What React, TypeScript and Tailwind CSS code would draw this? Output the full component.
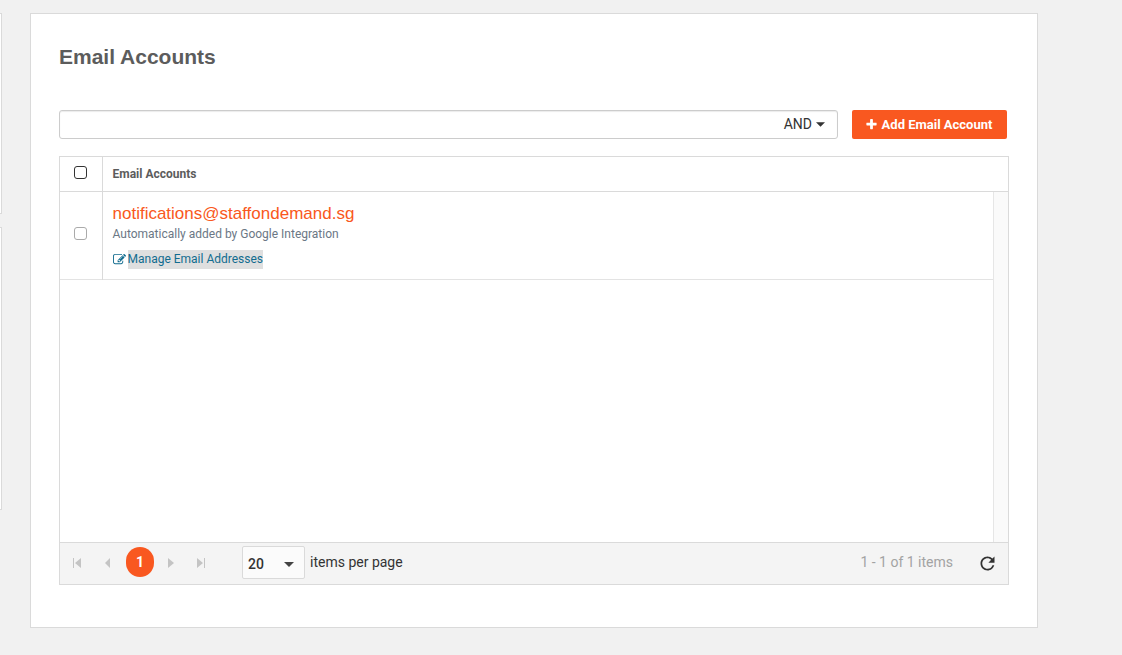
import { useState } from 'react'
import { MdRefresh } from 'react-icons/md'
import clsx from 'clsx'

const accounts = [
  { email: 'notifications@staffondemand.sg', note: 'Automatically added by Google Integration' },
]

const pagerIcons = {
  first: 'M0 0h1v10H0zM8 0v10L2 5z',
  prev: 'M7 0v10L2 5z',
  next: 'M1 0v10l6-5z',
  last: 'M0 0v10l6-5zM7 0h1v10H7z',
}

function PagerButton({ icon, label, className }: { icon: keyof typeof pagerIcons; label: string; className?: string }) {
  return (
    <button aria-label={label} className={clsx('flex h-5 w-5 items-center justify-center text-[#c4c4c4]', className)}>
      <svg viewBox="0 0 9 10" className="h-[10px] w-[9px]" fill="currentColor">
        <path d={pagerIcons[icon]} />
      </svg>
    </button>
  )
}

function Caret({ className }: { className?: string }) {
  return (
    <svg viewBox="0 0 10 5" className={className} fill="currentColor">
      <path d="M0 0h10L5 5z" />
    </svg>
  )
}

export default function App() {
  const [query, setQuery] = useState('')
  const [checked, setChecked] = useState(false)

  return (
    <div className="flex min-h-screen items-start bg-[#f1f1f1] pt-[13px] pb-[27px] font-['Roboto',sans-serif] text-[#333]">
      {/* Edge of the settings column */}
      <aside className="flex w-0.5 shrink-0 flex-col gap-[13px]">
        <div className="h-[201px] border border-l-0 border-[#dadada] bg-white" />
        <div className="h-[283px] border border-l-0 border-[#dadada] bg-white" />
      </aside>

      <main className="mr-[84px] ml-7 min-w-0 flex-1 border border-[#dadada] bg-white px-7 pt-7 pb-[42px]">
        <h1 className="font-['Liberation_Sans',Arial,sans-serif] text-[21px] leading-[30px] font-bold text-[#5c5c5c]">
          Email Accounts
        </h1>

        {/* Search */}
        <div className="mt-[38px] mr-0.5 flex h-[29px] gap-3.5">
          <div className="flex flex-1 items-center rounded-[3px] border border-[#ccc] pr-3 shadow-[inset_0_1px_1px_rgba(0,0,0,0.08)]">
            <input
              type="text"
              aria-label="Search email accounts"
              value={query}
              onChange={(e) => setQuery(e.target.value)}
              className="h-full min-w-0 flex-1 bg-transparent px-2 text-sm outline-none"
            />
            <button className="flex items-center gap-1 pb-px text-sm">
              AND
              <Caret className="h-[5px] w-[9px]" />
            </button>
          </div>
          <button className="flex w-[155px] items-center justify-center gap-1 rounded-[2px] bg-[#f95820] pr-0.5 text-[13px] font-bold whitespace-nowrap text-white">
            <svg viewBox="0 0 1792 1792" className="h-[13px] w-[13px]" fill="currentColor">
              <path d="M1600 736v192q0 40-28 68t-68 28h-416v416q0 40-28 68t-68 28h-192q-40 0-68-28t-28-68v-416h-416q-40 0-68-28t-28-68v-192q0-40 28-68t68-28h416v-416q0-40 28-68t68-28h192q40 0 68 28t28 68v416h416q40 0 68 28t28 68z" />
            </svg>
            Add Email Account
          </button>
        </div>

        {/* Grid */}
        <div className="mt-[17px] border border-[#dadada]">
          <table className="w-full table-fixed border-collapse">
            <thead>
              <tr className="h-[34px] border-b border-[#dadada]">
                <th className="w-[42px] border-r border-[#dadada] p-0 pb-0.5">
                  <input
                    type="checkbox"
                    aria-label="Select all"
                    checked={checked}
                    onChange={(e) => setChecked(e.target.checked)}
                    className="mx-auto block h-[13px] w-[13px] appearance-none rounded-[3px] border border-[#333] bg-white checked:bg-[#f95820]"
                  />
                </th>
                <th className="px-2.5 py-0 text-left text-xs font-bold text-[#5c5c5c]">Email Accounts</th>
              </tr>
            </thead>
          </table>

          <div className="flex h-[350px]">
            <div className="min-w-0 flex-1">
              <table className="w-full table-fixed border-collapse">
                <tbody>
                  {accounts.map((account) => (
                    <tr key={account.email} className="h-[88px] border-b border-[#e3e3e3]">
                      <td className="w-[42px] border-r border-[#dadada] p-0 pb-1">
                        <input
                          type="checkbox"
                          aria-label={account.email}
                          className="mx-auto block h-[13px] w-[13px] appearance-none rounded-[3px] border border-[#aaa] bg-white checked:bg-[#f95820]"
                        />
                      </td>
                      <td className="px-2.5 pt-0.5 pb-0">
                        <a href="#account" className="block pt-px font-['Liberation_Sans',Arial,sans-serif] text-[17px] leading-5 text-[#f95820]">
                          {account.email}
                        </a>
                        <p className="text-xs leading-5 text-[#6b7785]">{account.note}</p>
                        <a href="#addresses" className="mt-1.5 flex items-center gap-0.5 text-xs text-[#126c8f]">
                          <svg viewBox="0 0 1792 1792" className="h-[13px] w-[13px]" fill="currentColor">
                            <path d="M888 1184l116-116-152-152-116 116v56h96v96h56zm440-720q-16-16-33 1l-350 350q-17 17-1 33t33-1l350-350q17-17 1-33zm80 594v190q0 119-84.5 203.5t-203.5 84.5h-832q-119 0-203.5-84.5t-84.5-203.5v-832q0-119 84.5-203.5t203.5-84.5h832q63 0 117 25 15 7 18 23 3 17-9 29l-49 49q-14 14-32 8-23-6-45-6h-832q-66 0-113 47t-47 113v832q0 66 47 113t113 47h832q66 0 113-47t47-113v-126q0-13 9-22l64-64q15-15 35-7t20 29zm-96-738l288 288-672 672h-288v-288zm444 132l-92 92-288-288 92-92q28-28 68-28t68 28l152 152q28 28 28 68t-28 68z" />
                          </svg>
                          <span className="bg-[#dfdfdf] leading-[19px]">Manage Email Addresses</span>
                        </a>
                      </td>
                    </tr>
                  ))}
                </tbody>
              </table>
            </div>
            <div className="w-[15px] border-l border-[#e6e6e6] bg-[#fafafa]" />
          </div>

          {/* Pager */}
          <div className="flex h-[42px] items-center border-t border-[#dadada] bg-[#f4f4f4] pr-2.5 pl-[7px] text-sm">
            <PagerButton icon="first" label="First page" />
            <PagerButton icon="prev" label="Previous page" className="ml-2.5" />
            <button className="mb-0.5 ml-[9px] h-[30px] w-7 rounded-[14px] bg-[#f95820] font-bold text-white">1</button>
            <PagerButton icon="next" label="Next page" className="ml-[7px]" />
            <PagerButton icon="last" label="Last page" className="ml-2.5" />

            <label className="ml-[31px] flex items-center gap-[5px] pb-0.5">
              <span className="relative">
                <select
                  aria-label="Items per page"
                  defaultValue="20"
                  className="block h-[33px] w-[63px] appearance-none rounded-[2px] border border-[#dadada] bg-[#fbfbfb] px-[5px] pt-[3px] text-sm font-medium outline-none"
                >
                  <option>20</option>
                  <option>50</option>
                  <option>100</option>
                </select>
                <Caret className="pointer-events-none absolute top-4 right-[11px] h-[5px] w-[10px] text-[#444]" />
              </span>
              items per page
            </label>

            <span className="ml-auto pb-0.5 text-[#a3a3a3]">1 - 1 of 1 items</span>
            <button aria-label="Refresh" className="ml-6 text-[#333]">
              <MdRefresh className="h-[21px] w-[21px]" />
            </button>
          </div>
        </div>
      </main>
    </div>
  )
}
